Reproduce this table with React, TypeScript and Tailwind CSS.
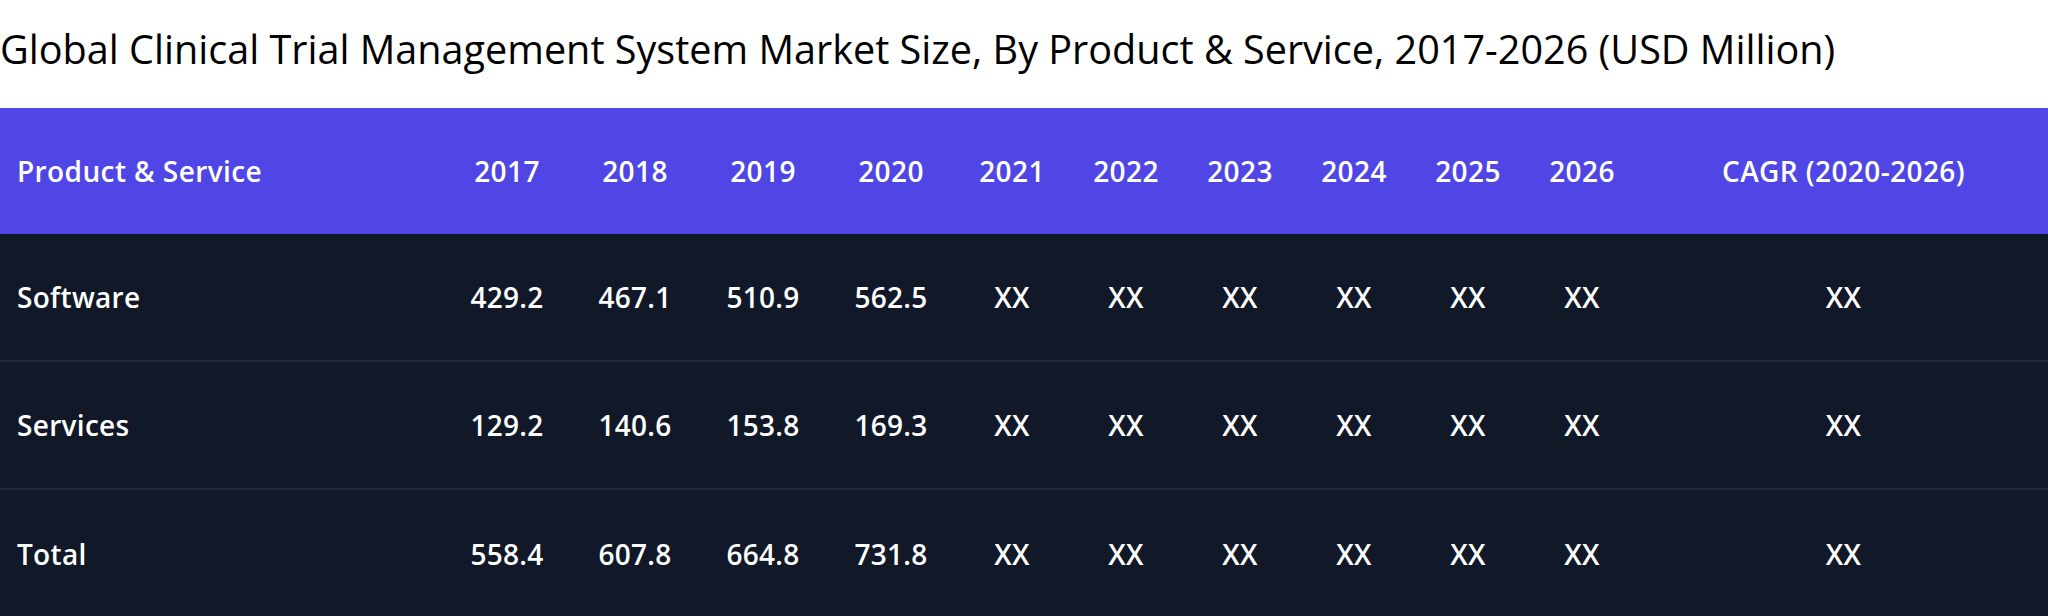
const years = ["2017", "2018", "2019", "2020", "2021", "2022", "2023", "2024", "2025", "2026"]

const rows = [
  { name: "Software", values: ["429.2", "467.1", "510.9", "562.5", "XX", "XX", "XX", "XX", "XX", "XX"], cagr: "XX" },
  { name: "Services", values: ["129.2", "140.6", "153.8", "169.3", "XX", "XX", "XX", "XX", "XX", "XX"], cagr: "XX" },
  { name: "Total", values: ["558.4", "607.8", "664.8", "731.8", "XX", "XX", "XX", "XX", "XX", "XX"], cagr: "XX" },
]

const grid = "grid grid-cols-[443px_128px_128px_128px_128px_114px_114px_114px_114px_114px_114px_1fr] items-center"

export default function App() {
  return (
    <div className="w-[2048px] bg-white font-['Open_Sans',sans-serif]">
      <div className="h-[108px] pt-[22px]">
        <h1 className="text-[39.6px] leading-[54px] font-normal text-black">
          Global Clinical Trial Management System Market Size, By Product &amp; Service, 2017-2026 (USD Million)
        </h1>
      </div>

      <div className={`${grid} h-[126px] bg-[#4f46e5] text-[28px] font-semibold tracking-[0.4px] text-white`}>
        <div className="pl-[17px]">Product &amp; Service</div>
        {years.map((y) => (
          <div key={y} className="text-center">{y}</div>
        ))}
        <div className="text-center">CAGR (2020-2026)</div>
      </div>

      <div className="bg-[#111827]">
        {rows.map((r, i) => (
          <div
            key={r.name}
            className={`${grid} h-[128px] text-[28px] font-semibold tracking-[0.3px] text-white ${i < rows.length - 1 ? "border-b-2 border-[#1f2937]" : ""}`}
          >
            <div className="pl-[17px]">{r.name}</div>
            {r.values.map((v, j) => (
              <div key={j} className="text-center">{v}</div>
            ))}
            <div className="text-center">{r.cagr}</div>
          </div>
        ))}
      </div>
    </div>
  )
}
